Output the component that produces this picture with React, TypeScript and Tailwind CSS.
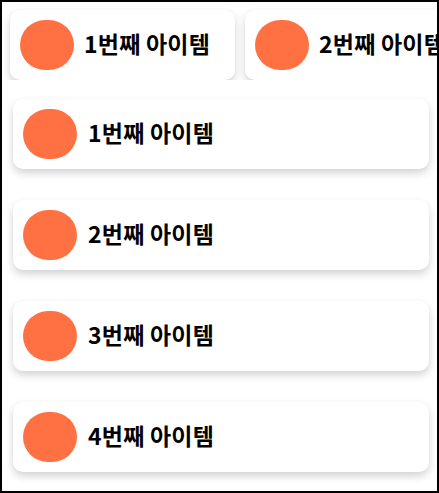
const items = ['1번째 아이템', '2번째 아이템', '3번째 아이템', '4번째 아이템'];

const Dot = () => <div className="w-[54px] h-[50px] shrink-0 rounded-full bg-[#ff7043]" />;

export default function App() {
    return (
        <div
            className="w-[439px] h-[493px] border-2 border-black bg-white overflow-hidden"
            style={{ fontFamily: '"Noto Sans CJK KR", "Noto Sans", sans-serif' }}
        >
            <div className="flex gap-[10px] pl-[8px] pt-[8px] overflow-hidden">
                {items.map((label) => (
                    <div
                        key={label}
                        className="flex items-center gap-[10px] shrink-0 w-[225px] h-[70px] pl-[10px] rounded-[10px] bg-white shadow-[0_4px_8px_rgba(0,0,0,0.18)]"
                    >
                        <Dot />
                        <span className="pb-[4px] text-[23px] font-bold text-black leading-none tracking-[0.2px] whitespace-nowrap">{label}</span>
                    </div>
                ))}
            </div>

            <div className="flex flex-col gap-[31px] pl-[11px] pt-[19px]">
                {items.map((label) => (
                    <div
                        key={label}
                        className="flex items-center gap-[11px] w-[416px] h-[70px] pl-[10px] rounded-[10px] bg-white shadow-[0_4px_8px_rgba(0,0,0,0.18)]"
                    >
                        <Dot />
                        <span className="pb-[4px] text-[23px] font-bold text-black leading-none tracking-[0.2px] whitespace-nowrap">{label}</span>
                    </div>
                ))}
            </div>
        </div>
    );
}
